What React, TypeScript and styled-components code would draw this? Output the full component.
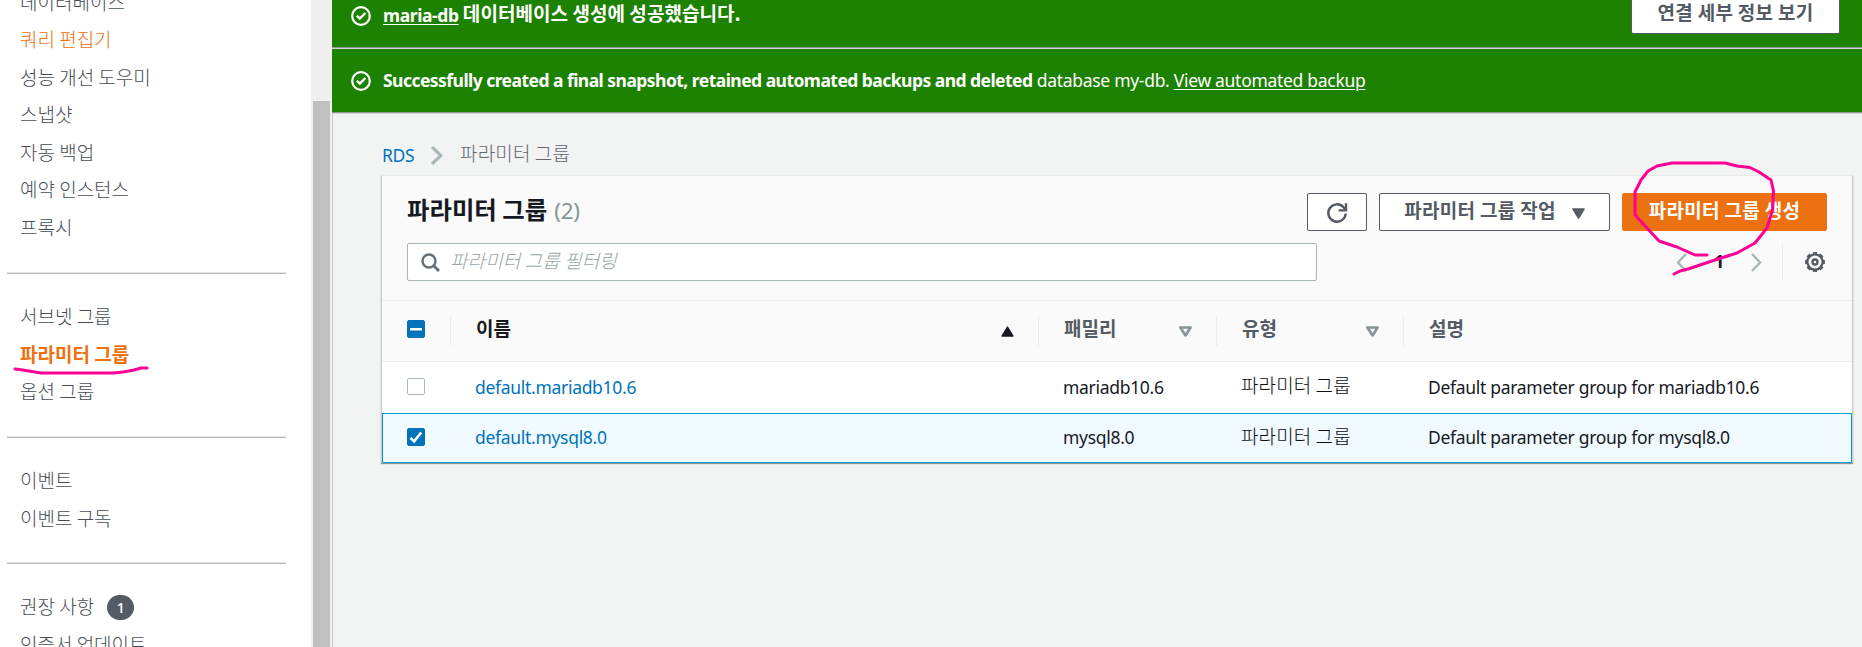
import React from "react";
import styled, { createGlobalStyle, css } from "styled-components";

const Global = createGlobalStyle`
  * { box-sizing: border-box; }
  html, body { margin: 0; padding: 0; overflow: hidden; }
  body { background: #f2f3f3; color: #16191f; }
`;

const latin = css`
  font-family: "Noto Sans", "Noto Sans CJK KR", sans-serif;
  font-size: 17.5px;
  letter-spacing: -0.3px;
`;
const korean = css`
  font-family: "Noto Sans CJK KR", sans-serif;
  font-size: 19px;
  font-weight: 300;
  letter-spacing: 0;
`;

const Page = styled.div`
  position: relative;
  display: flex;
  width: 1862px;
  height: 647px;
  overflow: hidden;
  white-space: nowrap;
`;

const Sidebar = styled.nav`
  width: 311px;
  flex-shrink: 0;
  background: #fff;
  overflow: hidden;
`;
const NavGroup = styled.ul<{ $first?: boolean }>`
  list-style: none;
  padding: 0 0 0 20px;
  margin: ${(p) => (p.$first ? "-17.5px 0 27px" : "23px 0 26.25px")};
`;
const NavItem = styled.li<{ $tone?: "hover" | "active" }>`
  ${korean}
  display: flex;
  align-items: center;
  height: 37.5px;
  color: ${(p) => (p.$tone ? "#ec7211" : "#464d57")};
  font-weight: ${(p) => (p.$tone === "active" ? 700 : 300)};
`;
const NavDivider = styled.hr`
  width: 279px;
  height: 2px;
  margin: 0 0 0 7px;
  border: 0;
  border-top: 1px solid #e6e6e6;
  border-bottom: 1px solid #b9b9b9;
`;
const Badge = styled.span`
  ${latin}
  display: flex;
  align-items: center;
  justify-content: center;
  width: 27px;
  height: 25px;
  margin: 3px 0 0 13px;
  border-radius: 13px;
  background: #545b64;
  color: #fff;
  font-size: 15px;
  font-weight: 500;
`;

const ScrollTrack = styled.div`
  width: 21px;
  flex-shrink: 0;
  padding: 101px 2px 0;
  background: #f0f0f0;
`;
const ScrollThumb = styled.div`
  width: 17px;
  height: 546px;
  background: #c0c0c0;
`;

const Main = styled.main`
  flex: 1;
  min-width: 0;
  display: flex;
  flex-direction: column;
`;
const Banner = styled.div<{ $scrolled?: boolean }>`
  display: flex;
  align-items: center;
  height: ${(p) => (p.$scrolled ? 49 : 65)}px;
  padding: 0 22px ${(p) => (p.$scrolled ? 19 : 0)}px 19px;
  background: #1d8102;
  border-bottom: 1px solid #d3d5d9;
  box-shadow: inset 0 -1px 0 #8f9a95;
  color: #fff;
`;
const BannerText = styled.p`
  ${latin}
  flex: 1;
  margin: -2px 0 0 12px;
`;
const Strong = styled.b`
  font-weight: 700;
  letter-spacing: -0.54px;
`;
const Link = styled.a<{ $bold?: boolean }>`
  color: inherit;
  text-decoration: underline;
  text-underline-offset: 2px;
  text-decoration-thickness: 1px;
  font-weight: ${(p) => (p.$bold ? 700 : 400)};
  letter-spacing: ${(p) => (p.$bold ? -0.4 : -0.3)}px;
`;
const KoBold = styled.span`
  ${korean}
  position: relative;
  top: -1px;
  font-weight: 700;
  letter-spacing: 0.05px;
`;

const Button = styled.button<{ $w: number; $primary?: boolean }>`
  ${korean}
  display: flex;
  align-items: center;
  justify-content: center;
  flex-shrink: 0;
  width: ${(p) => p.$w}px;
  height: 38px;
  padding: 0 0 6px;
  border: 1px solid ${(p) => (p.$primary ? "#ec7211" : "#545b64")};
  border-radius: 2px;
  background: ${(p) => (p.$primary ? "#ec7211" : "#fff")};
  color: ${(p) => (p.$primary ? "#fff" : "#545b64")};
  font-weight: 700;
  letter-spacing: 0.3px;
  white-space: nowrap;
`;

const Content = styled.div`
  flex: 1;
  padding: 29px 9px 0 48px;
  border-left: 1px solid #c4cacb;
`;
const Breadcrumb = styled.div`
  display: flex;
  align-items: center;
  height: 24px;
  margin-bottom: 8px;
`;
const Crumb = styled.a`
  ${latin}
  width: 50px;
  padding-left: 1px;
  color: #0073bb;
`;
const CrumbCurrent = styled.span`
  ${korean}
  margin: -6px 0 0 17px;
  color: #5f6770;
  letter-spacing: 0.15px;
`;

const Card = styled.section`
  width: 1472px;
  background: #fff;
  border: 1px solid #c8cdcf;
  border-top-color: #e8eaea;
  border-bottom: 0;
  box-shadow: 0 1px 1px #8d9797;
`;
const CardHead = styled.header`
  height: 124px;
  padding: 17px 25px 0 25px;
  background: #fafafa;
`;
const HeadRow = styled.div<{ $mt?: number }>`
  display: flex;
  align-items: center;
  height: 38px;
  margin-top: ${(p) => p.$mt ?? 0}px;
`;
const Title = styled.h2`
  ${korean}
  flex: 1;
  margin: -7px 0 0;
  font-size: 24.4px;
  font-weight: 700;
`;
const Count = styled.span`
  ${latin}
  margin-left: 7px;
  font-size: 22.5px;
  font-weight: 400;
  color: #879596;
`;
const Actions = styled.div`
  display: flex;
  gap: 12px;
`;
const Search = styled.div`
  ${korean}
  display: flex;
  align-items: center;
  width: 910px;
  height: 38px;
  padding: 0 13px;
  background: #fff;
  border: 1px solid #aab7b8;
  border-radius: 2px;
  color: #98a7a8;
  font-style: italic;
`;
const Placeholder = styled.span`
  margin: -6px 0 0 10px;
  letter-spacing: 0.1px;
`;
const Pager = styled.div`
  display: flex;
  align-items: center;
  height: 38px;
  margin-left: auto;
`;
const PageNumber = styled.span`
  ${latin}
  width: 64px;
  margin-top: -2px;
  text-align: center;
  font-weight: 700;
`;
const Settings = styled.div`
  display: flex;
  align-items: center;
  justify-content: flex-end;
  width: 45px;
  height: 38px;
  margin-left: 20px;
  padding-right: 2px;
  border-left: 1px solid #eaeded;
`;

const columns = css`
  display: grid;
  grid-template-columns: 69px 588px 178px 187px 1fr;
  align-items: center;
`;
const TableHead = styled.div`
  ${columns}
  height: 62px;
  background: #fafafa;
  border-top: 1px solid #eaeded;
  border-bottom: 1px solid #eaeded;
`;
const HeadCell = styled.div<{ $active?: boolean; $last?: boolean }>`
  ${korean}
  display: flex;
  align-items: center;
  justify-content: space-between;
  height: 30px;
  padding: 0 24px 0 25px;
  border-right: ${(p) => (p.$last ? 0 : 1)}px solid #eaeded;
  color: ${(p) => (p.$active ? "#16191f" : "#545b64")};
  font-weight: 700;
`;
const HeadLabel = styled.span`
  margin-top: -8px;
`;
const CheckHead = styled.div`
  display: flex;
  align-items: center;
  height: 30px;
  padding: 0 0 4px 25px;
  border-right: 1px solid #eaeded;
`;
const Row = styled.div<{ $selected?: boolean }>`
  ${columns}
  height: ${(p) => (p.$selected ? 50 : 51)}px;
  ${(p) =>
    p.$selected &&
    css`
      background: #f1faff;
      box-shadow: inset 0 0 0 1px #00a1c9;
    `}
`;
const CheckCell = styled.div`
  display: flex;
  padding: 0 0 2px 25px;
`;
const Cell = styled.div<{ $link?: boolean }>`
  ${latin}
  padding: 0 0 2px 24px;
  color: ${(p) => (p.$link ? "#0073bb" : "#16191f")};
`;
const KoCell = styled.div`
  ${korean}
  padding: 0 0 6px 24px;
  color: #0c0e12;
  letter-spacing: 0.1px;
`;

const Box = styled.span<{ $on?: boolean }>`
  display: flex;
  align-items: center;
  justify-content: center;
  width: 18px;
  height: ${(p) => (p.$on ? 18 : 17)}px;
  border: 1px solid ${(p) => (p.$on ? "#0073bb" : "#aab7b8")};
  border-radius: 2px;
  background: ${(p) => (p.$on ? "#0073bb" : "#fff")};
`;

const Ink = styled.svg`
  position: absolute;
  inset: 0;
  pointer-events: none;
`;
const StatusMark = styled.svg<{ $drop?: boolean }>`
  margin-top: ${(p) => (p.$drop ? 3 : 0)}px;
`;
const RefreshMark = styled.svg`
  margin-top: 7px;
`;
const CaretMark = styled.svg`
  margin: 9px 0 0 16px;
`;

const SuccessIcon = ({ drop }: { drop?: boolean }) => (
  <StatusMark $drop={drop} width="20" height="20" viewBox="0 0 20 20" fill="none" stroke="#fff" strokeWidth="2.2">
    <circle cx="10" cy="10" r="8.8" />
    <path d="M5.800 9.600l3 3 5.600-5.600" strokeWidth="2.4" />
  </StatusMark>
);
const Chevron = ({ left, w = 11, sw = 2.4 }: { left?: boolean; w?: number; sw?: number }) => (
  <svg width={w} height="19" viewBox="0 0 11 19" preserveAspectRatio="none" fill="none" stroke="#aab7b8" strokeWidth={sw}>
    <path d={left ? "M10 1L2 9.5L10 18" : "M1 1L9 9.5L1 18"} />
  </svg>
);
const RefreshIcon = () => (
  <RefreshMark width="22" height="22" viewBox="0 0 22 22" fill="none" stroke="#545b64" strokeWidth="2.4">
    <path d="M19.7 11.5A8.7 8.7 0 1 1 17.500 5.200L19.600 7.600" />
    <path d="M20 1.2V8.4H12.6" />
  </RefreshMark>
);
const CaretDown = () => (
  <CaretMark width="13" height="11" viewBox="0 0 13 11">
    <path d="M1 1H12L6.5 10Z" fill="#545b64" stroke="#545b64" strokeWidth="1.6" strokeLinejoin="round" />
  </CaretMark>
);
const SortIcon = ({ up }: { up?: boolean }) => (
  <svg width="13" height="11" viewBox="0 0 13 11">
    {up ? (
      <path d="M6.5 1L12 10H1Z" fill="#16191f" stroke="#16191f" strokeWidth="1.4" strokeLinejoin="round" />
    ) : (
      <path d="M1.4 1.5H11.6L6.5 9.4Z" fill="#fafafa" stroke="#879596" strokeWidth="2.7" strokeLinejoin="round" />
    )}
  </svg>
);
const SearchIcon = () => (
  <svg width="19" height="19" viewBox="0 0 19 19" fill="none" stroke="#687078" strokeWidth="2.4">
    <circle cx="8" cy="8" r="6.5" />
    <path d="M12.3 12.3L18 18" strokeWidth="3" />
  </svg>
);
const GearIcon = () => {
  const teeth = Array.from({ length: 8 }, (_, i) => i * 45);
  return (
    <svg width="20" height="20" viewBox="0 0 20 20" fill="none" stroke="#545b64">
      <circle cx="10" cy="10" r="7.6" strokeWidth="2.2" />
      {teeth.map((a) => (
        <path key={a} d="M7.900 1.200H12.100" strokeWidth="2.2" transform={`rotate(${a} 10 10)`} />
      ))}
      <circle cx="10" cy="10" r="2.5" strokeWidth="2.4" />
    </svg>
  );
};
const Dash = () => (
  <svg width="12" height="3" viewBox="0 0 12 3">
    <rect width="12" height="2.5" fill="#fff" />
  </svg>
);
const Check = () => (
  <svg width="14" height="13" viewBox="0 0 14 13" fill="none" stroke="#fff" strokeWidth="2.6">
    <path d="M1.5 7L5.2 10.4L12.2 1.5" />
  </svg>
);

const rows = [
  { name: "default.mariadb10.6", family: "mariadb10.6", selected: false },
  { name: "default.mysql8.0", family: "mysql8.0", selected: true },
];

export default function App() {
  return (
    <>
      <Global />
      <Page>
        <Sidebar>
          <NavGroup $first>
            <NavItem>데이터베이스</NavItem>
            <NavItem $tone="hover">쿼리 편집기</NavItem>
            <NavItem>성능 개선 도우미</NavItem>
            <NavItem>스냅샷</NavItem>
            <NavItem>자동 백업</NavItem>
            <NavItem>예약 인스턴스</NavItem>
            <NavItem>프록시</NavItem>
          </NavGroup>
          <NavDivider />
          <NavGroup>
            <NavItem>서브넷 그룹</NavItem>
            <NavItem $tone="active">파라미터 그룹</NavItem>
            <NavItem>옵션 그룹</NavItem>
          </NavGroup>
          <NavDivider />
          <NavGroup>
            <NavItem>이벤트</NavItem>
            <NavItem>이벤트 구독</NavItem>
          </NavGroup>
          <NavDivider />
          <NavGroup>
            <NavItem>
              권장 사항<Badge>1</Badge>
            </NavItem>
            <NavItem>인증서 업데이트</NavItem>
          </NavGroup>
        </Sidebar>
        <ScrollTrack>
          <ScrollThumb />
        </ScrollTrack>
        <Main>
          <Banner $scrolled>
            <SuccessIcon drop />
            <BannerText>
              <Link $bold>maria-db</Link> <KoBold>데이터베이스 생성에 성공했습니다.</KoBold>
            </BannerText>
            <Button $w={209}>연결 세부 정보 보기</Button>
          </Banner>
          <Banner>
            <SuccessIcon />
            <BannerText>
              <Strong>Successfully created a final snapshot, retained automated backups and deleted</Strong> database my-db.{" "}
              <Link>View automated backup</Link>
            </BannerText>
          </Banner>
          <Content>
            <Breadcrumb>
              <Crumb>RDS</Crumb>
              <Chevron w={12} sw={3} />
              <CrumbCurrent>파라미터 그룹</CrumbCurrent>
            </Breadcrumb>
            <Card>
              <CardHead>
                <HeadRow>
                  <Title>
                    파라미터 그룹<Count>(2)</Count>
                  </Title>
                  <Actions>
                    <Button $w={60} aria-label="새로 고침">
                      <RefreshIcon />
                    </Button>
                    <Button $w={231}>
                      파라미터 그룹 작업
                      <CaretDown />
                    </Button>
                    <Button $w={205} $primary>
                      파라미터 그룹 생성
                    </Button>
                  </Actions>
                </HeadRow>
                <HeadRow $mt={12}>
                  <Search>
                    <SearchIcon />
                    <Placeholder>파라미터 그룹 필터링</Placeholder>
                  </Search>
                  <Pager>
                    <Chevron left />
                    <PageNumber>1</PageNumber>
                    <Chevron />
                    <Settings>
                      <GearIcon />
                    </Settings>
                  </Pager>
                </HeadRow>
              </CardHead>
              <TableHead>
                <CheckHead>
                  <Box $on>
                    <Dash />
                  </Box>
                </CheckHead>
                <HeadCell $active>
                  <HeadLabel>이름</HeadLabel>
                  <SortIcon up />
                </HeadCell>
                <HeadCell>
                  <HeadLabel>패밀리</HeadLabel>
                  <SortIcon />
                </HeadCell>
                <HeadCell>
                  <HeadLabel>유형</HeadLabel>
                  <SortIcon />
                </HeadCell>
                <HeadCell $last>
                  <HeadLabel>설명</HeadLabel>
                </HeadCell>
              </TableHead>
              {rows.map((r) => (
                <Row key={r.name} $selected={r.selected}>
                  <CheckCell>
                    <Box $on={r.selected}>{r.selected && <Check />}</Box>
                  </CheckCell>
                  <Cell $link>{r.name}</Cell>
                  <Cell>{r.family}</Cell>
                  <KoCell>파라미터 그룹</KoCell>
                  <Cell>Default parameter group for {r.family}</Cell>
                </Row>
              ))}
            </Card>
          </Content>
        </Main>
        <Ink width="1862" height="647" fill="none" stroke="#ff0096" strokeWidth="3" strokeLinecap="round" strokeLinejoin="round">
          <path d="M15 369L23 370L32 371.5L41 373H113L123 372L134 370L141 368L147 368" />
          <path d="M1707 255H1695L1677 247L1659 241L1647 228L1635 215V192L1641 180L1648 171L1657 166L1672 163H1725L1737 166L1750 167.500L1759 172L1771 180L1773.500 191L1772.500 210L1767 228L1755 243L1737 253L1718 259L1688 269L1680 271L1674 274" />
        </Ink>
      </Page>
    </>
  );
}
